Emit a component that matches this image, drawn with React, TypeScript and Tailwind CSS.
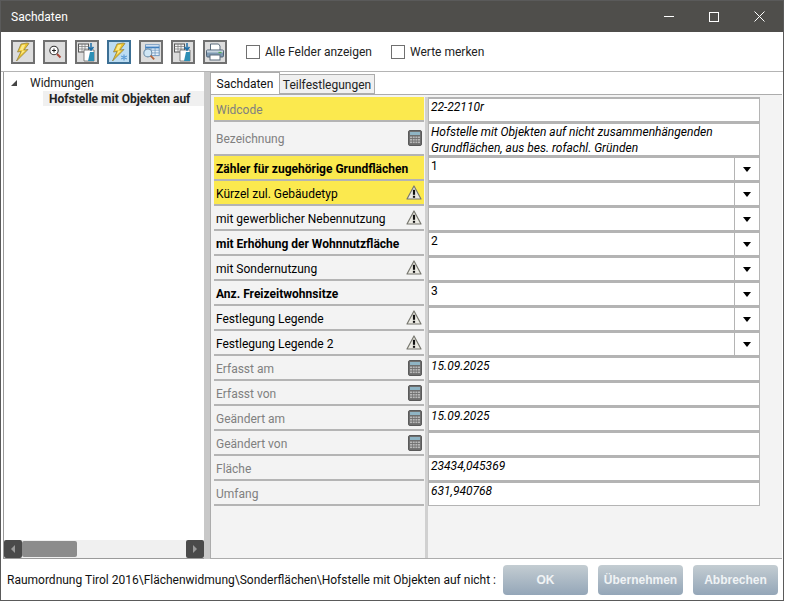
const font = { fontFamily: 'Roboto, "Noto Sans", sans-serif' };

type Row = {
  label: string;
  value?: string;
  h?: string;
  yellow?: boolean;
  bold?: boolean;
  muted?: boolean;
  icon?: "calc" | "warn";
  combo?: boolean;
};

const rows: Row[] = [
  { label: "Widcode", value: "22-22110r", yellow: true, muted: true },
  {
    label: "Bezeichnung",
    value: "Hofstelle mit Objekten auf nicht zusammenhängenden Grundflächen, aus bes. rofachl. Gründen",
    h: "h-[34px]",
    muted: true,
    icon: "calc",
  },
  { label: "Zähler für zugehörige Grundflächen", value: "1", yellow: true, bold: true, combo: true },
  { label: "Kürzel zul. Gebäudetyp", yellow: true, icon: "warn", combo: true },
  { label: "mit gewerblicher Nebennutzung", icon: "warn", combo: true },
  { label: "mit Erhöhung der Wohnnutzfläche", value: "2", bold: true, combo: true },
  { label: "mit Sondernutzung", icon: "warn", combo: true },
  { label: "Anz. Freizeitwohnsitze", value: "3", bold: true, combo: true },
  { label: "Festlegung Legende", icon: "warn", combo: true },
  { label: "Festlegung Legende 2", icon: "warn", combo: true },
  { label: "Erfasst am", value: "15.09.2025", muted: true, icon: "calc" },
  { label: "Erfasst von", muted: true, icon: "calc" },
  { label: "Geändert am", value: "15.09.2025", muted: true, icon: "calc" },
  { label: "Geändert von", muted: true, icon: "calc" },
  { label: "Fläche", value: "23434,045369", muted: true },
  { label: "Umfang", value: "631,940768", muted: true },
];

function Bolt({ spark }: { spark?: boolean }) {
  return (
    <svg width="20" height="20" viewBox="0 0 20 20">
      <path d="M14 1 L8 2 L4.500 10 L8 9.500 L3.500 19 L15 7.500 L11 8 L16 1.500 Z" fill="#e9c22c" stroke="#8a7a3a" strokeWidth="0.700" />
      <path d="M12.500 2.500 L9 3 L6.500 8.500 L9.500 8 L7.500 13 L12.500 8.500 L9.500 8.800 Z" fill="#fbe98a" />
      {spark && (
        <path d="M15 12.500v6M12.200 14l5.600 3M17.800 14l-5.600 3" stroke="#5b9bd5" strokeWidth="1.100" />
      )}
    </svg>
  );
}

function Zoom() {
  return (
    <svg width="18" height="18" viewBox="0 0 18 18">
      <circle cx="8" cy="7.500" r="4.200" fill="#fff" stroke="#333" strokeWidth="1.100" />
      <path d="M6 7.500h4M8 5.500v4" stroke="#222" strokeWidth="1" />
      <path d="M11 11l3.500 3.500" stroke="#a8483a" strokeWidth="2" />
    </svg>
  );
}

function Copy() {
  return (
    <svg width="20" height="20" viewBox="0 0 20 20">
      <rect x="1.500" y="2" width="10" height="8" fill="#f4f4f4" stroke="#555" />
      <path d="M1.500 4.500h10M5 2v8M8 2v8M1.500 7h10" stroke="#777" strokeWidth="0.700" />
      <path d="M7 8h10v11H7z" fill="#fff" stroke="#666" strokeWidth="0.800" />
      <path d="M13 10h4v9h-6z" fill="#2d8fb5" />
      <path d="M14 1v6M11.500 5l2.500 3 2.500-3" stroke="#1f6fa8" strokeWidth="1.500" fill="none" />
    </svg>
  );
}

function TableSearch() {
  return (
    <svg width="22" height="20" viewBox="0 0 22 20">
      <rect x="5" y="2" width="15" height="12" fill="#e8f1fa" stroke="#6a93bd" />
      <path d="M5 5h15" stroke="#3f7fc0" strokeWidth="2" />
      <path d="M5 8h15M5 11h15M11 5v9M15.500 5v9" stroke="#6a93bd" strokeWidth="0.800" />
      <circle cx="7.500" cy="11" r="4.400" fill="#cfe6f5" stroke="#6f8ea8" strokeWidth="1.200" />
      <path d="M10.500 14l4 4" stroke="#b5633a" strokeWidth="2" />
    </svg>
  );
}

function Printer() {
  return (
    <svg width="20" height="20" viewBox="0 0 20 20">
      <path d="M5.500 2h8l1.500 2v5h-9.500z" fill="#fff" stroke="#5c6c7c" />
      <rect x="1.500" y="8" width="17" height="7" rx="1.200" fill="#7f9ab3" stroke="#4e6072" />
      <rect x="2" y="8.500" width="16" height="2" fill="#c8d5e0" />
      <rect x="5" y="13" width="10" height="5" fill="#fff" stroke="#5c6c7c" />
      <path d="M13.500 10.500h3" stroke="#4fae4f" strokeWidth="1.200" />
    </svg>
  );
}

function Calc() {
  return (
    <svg width="14" height="16" viewBox="0 0 14 16" className="shrink-0">
      <rect x="0.500" y="0.500" width="13" height="15" rx="1.500" fill="#6f6f6f" stroke="#5a5a5a" />
      <rect x="2" y="2" width="10" height="3" fill="#8fb4c4" />
      {[6.500, 9, 11.500].map((y) =>
        [2, 4.700, 7.400, 10].map((x) => (
          <rect key={`${x}-${y}`} x={x} y={y} width="2" height="1.600" fill="#b8b8b8" />
        ))
      )}
    </svg>
  );
}

function Warn() {
  return (
    <svg width="16" height="15" viewBox="0 0 16 15" className="shrink-0">
      <path d="M8 1 L15 14 H1 Z" fill="#ecebe4" stroke="#77776f" strokeWidth="1.200" strokeLinejoin="round" />
      <path d="M8 4.800v5" stroke="#111" strokeWidth="2.200" />
      <rect x="6.900" y="10.800" width="2.200" height="2" fill="#111" />
    </svg>
  );
}

function ToolButton({ children, active }: { children: React.ReactNode; active?: boolean }) {
  return (
    <div
      className={`flex h-6 w-6 items-center justify-center border-2 ${
        active ? "border-[#3c6f94] bg-[#bcdcf2]" : "border-[#707070] bg-[#dddddd]"
      }`}
    >
      {children}
    </div>
  );
}

function Check({ label }: { label: string }) {
  return (
    <div className="flex items-center gap-[5px]">
      <div className="h-[14px] w-[14px] border border-[#707070] bg-white" />
      <span className="pt-[1px] text-[12px] text-[#222]">{label}</span>
    </div>
  );
}

function FormRow({ row }: { row: Row }) {
  const h = row.h ?? "h-[25px]";
  const labelColor = row.muted ? "text-[#808080]" : "text-black";
  return (
    <div className={`flex ${h}`}>
      <div
        className={`flex w-[210px] shrink-0 items-center justify-between border-b-2 border-[#b4b4b4] pl-[2px] pr-[2px] text-[12px] ${labelColor} ${
          row.bold ? "font-bold" : ""
        } ${row.yellow ? "bg-[#fbe94e]" : ""}`}
      >
        <span className="whitespace-nowrap pt-[2px]">{row.label}</span>
        {row.icon === "calc" && <Calc />}
        {row.icon === "warn" && <Warn />}
      </div>
      <div className="w-[1px] shrink-0" />
      <div className="w-[3px] shrink-0 bg-[#d0d0d0]" />
      <div className="w-[1px] shrink-0 bg-[#b4b4b4]" />
      <div className="flex w-[331px]">
        <div
          className={`min-w-0 flex-1 border-t-2 border-b border-r border-[#b4b4b4] bg-white pl-[2px] text-[12px] leading-[16px] text-black ${
            row.combo ? "" : "italic"
          }`}
        >
          {row.value}
        </div>
        {row.combo && (
          <div className="flex w-[25px] items-center justify-center border-t-2 border-b border-r border-[#b4b4b4] bg-white">
            <div className="h-0 w-0 border-x-[4px] border-t-[5px] border-x-transparent border-t-black" />
          </div>
        )}
      </div>
    </div>
  );
}

function ActionButton({ label }: { label: string }) {
  return (
    <div
      style={{ fontFamily: '"Liberation Sans", sans-serif' }}
      className="flex h-[30px] w-[85px] items-center justify-center rounded-[4px] bg-gradient-to-b from-[#c4cdd2] to-[#94a6b8] text-[12px] font-bold text-[#f0f3f5]"
    >
      {label}
    </div>
  );
}

export default function App() {
  return (
    <div style={font} className="flex h-[602px] w-[785px] flex-col bg-white">
      <div className="flex h-[601px] w-[784px] flex-col border border-[#5a5a5a]">
        {/* title bar */}
        <div className="flex h-[31px] shrink-0 items-center justify-between bg-[#4f4e4b] pl-[10px] text-[12px] text-white">
          <span>Sachdaten</span>
          <div className="flex items-center">
            <div className="flex w-[46px] justify-center">
              <div className="h-[1px] w-[10px] bg-white" />
            </div>
            <div className="flex w-[44px] justify-center">
              <div className="h-[10px] w-[10px] border border-white" />
            </div>
            <div className="flex w-[47px] justify-center">
              <svg width="11" height="11" viewBox="0 0 11 11">
                <path d="M0.500 0.500l10 10M10.500 0.500l-10 10" stroke="#fff" strokeWidth="1" />
              </svg>
            </div>
          </div>
        </div>

        {/* toolbar */}
        <div className="flex h-[40px] shrink-0 items-center gap-[8px] border-b border-[#b4b4b4] pl-[10px]">
          <ToolButton><Bolt /></ToolButton>
          <ToolButton><Zoom /></ToolButton>
          <ToolButton><Copy /></ToolButton>
          <ToolButton active><Bolt spark /></ToolButton>
          <ToolButton><TableSearch /></ToolButton>
          <ToolButton><Copy /></ToolButton>
          <ToolButton><Printer /></ToolButton>
          <div className="ml-[11px] flex items-center gap-[19px]">
            <Check label="Alle Felder anzeigen" />
            <Check label="Werte merken" />
          </div>
        </div>

        <div className="flex min-h-0 flex-1 pl-[2px]">
          {/* tree */}
          <div className="flex w-[201px] shrink-0 flex-col border-b border-l border-[#9a9a9a]">
            <div className="flex-1 pt-[3px] text-[12px]">
              <div className="flex h-[16px] items-center pl-[7px] text-[#222]">
                <div className="h-0 w-0 border-b-[6px] border-l-[6px] border-b-[#444] border-l-transparent" />
                <span className="ml-[13px]">Widmungen</span>
              </div>
              <div className="ml-[39px] flex h-[15px] items-center bg-[#f0f0f0] pl-[6px] text-[12px] font-bold text-[#222]">
                <span className="whitespace-nowrap">Hofstelle mit Objekten auf</span>
              </div>
            </div>
            <div className="flex h-[18px] items-stretch bg-[#f0f0f0]">
              <div className="flex w-[18px] items-center justify-center rounded-[2px] bg-[#4a4a4a]">
                <div className="h-0 w-0 border-y-[4px] border-r-[4px] border-y-transparent border-r-[#999]" />
              </div>
              <div className="flex-1">
                <div className="mt-[1px] h-[16px] w-[55px] rounded-[2px] bg-[#8c8c8c]" />
              </div>
              <div className="flex w-[18px] items-center justify-center rounded-[2px] bg-[#4a4a4a]">
                <div className="h-0 w-0 border-y-[4px] border-l-[4px] border-y-transparent border-l-[#999]" />
              </div>
            </div>
          </div>

          {/* splitter */}
          <div className="w-[6px] shrink-0 bg-[#c8c8c8]" />

          {/* tabs and grid */}
          <div className="flex min-w-0 flex-1 flex-col pr-[1px]">
            <div className="relative z-10 flex h-[22px] shrink-0 items-end text-[12px]">
              <div className="flex h-[22px] w-[70px] items-center justify-center border border-b-0 border-[#acacac] bg-white pt-[1px] text-[#111]">
                Sachdaten
              </div>
              <div className="flex h-5 w-[95px] items-center justify-center border border-l-0 border-[#acacac] bg-[#f0f0f0] pt-[1px] text-[#222]">
                Teilfestlegungen
              </div>
            </div>
            <div className="flex min-h-0 flex-1 border-y border-l border-[#acacac] bg-[#f3f3f3] pl-[3px] pt-[2px]">
              <div className="flex w-[546px] flex-col">
                {rows.map((row) => (
                  <FormRow key={row.label} row={row} />
                ))}
                <div className="flex flex-1">
                  <div className="w-[211px]" />
                  <div className="w-[3px] bg-[#d0d0d0]" />
                </div>
              </div>
            </div>
          </div>
        </div>

        {/* footer */}
        <div className="flex h-[41px] shrink-0 items-center justify-between pl-[6px] pr-[5px] text-[12px] text-[#111]">
          <span className="whitespace-nowrap">
            Raumordnung Tirol 2016\Flächenwidmung\Sonderflächen\Hofstelle mit Objekten auf nicht :
          </span>
          <div className="flex gap-[10px]">
            <ActionButton label="OK" />
            <ActionButton label="Übernehmen" />
            <ActionButton label="Abbrechen" />
          </div>
        </div>
      </div>
    </div>
  );
}
